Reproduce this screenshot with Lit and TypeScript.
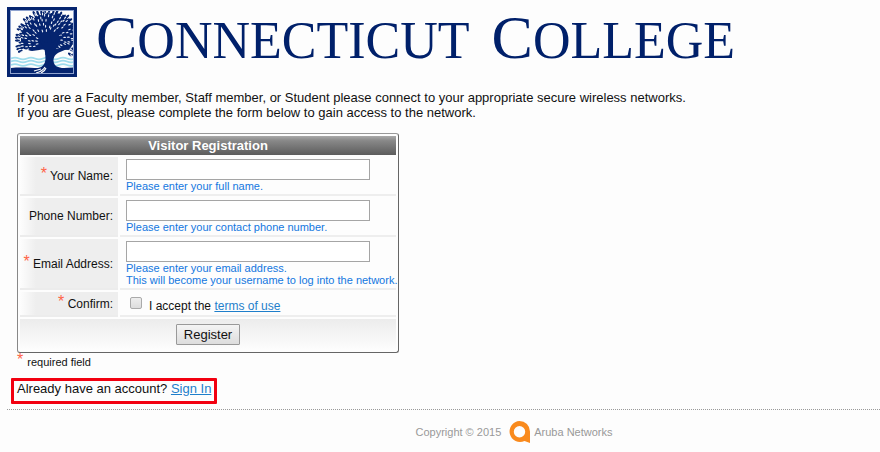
import { LitElement, html, svg, css, nothing } from "lit";
import { customElement } from "lit/decorators.js";

/** Leaf clusters on the crown's edge and the light between them: [x, y, rotation]. */
const leaves: number[][] = [];
const gaps: number[][] = [];
for (let ring = 0; ring < 7; ring++) {
  const count = 9 + ring * 4;
  for (let i = 0; i < count; i++) {
    const deg = -205 + (235 * i) / (count - 1) + (ring % 2) * 5;
    const rad = (deg * Math.PI) / 180;
    const r = 0.3 + ring * 0.12;
    const x = 41 + Math.cos(rad) * 30 * r;
    const y = 33 + Math.sin(rad) * 28 * r + ((i * 7) % 3) - 1;
    if (ring > 4) leaves.push([x, y, deg]);
    if ((i * 3 + ring) % 5 !== 0 && ring > 0) gaps.push([x + 1, y + 1, deg + 12]);
  }
}

@customElement("college-seal")
export class CollegeSeal extends LitElement {
  static styles = css`
    :host { display: block; flex: none; }
    svg { display: block; }
  `;
  render() {
    return html`<svg width="70" height="70" viewBox="0 0 70 70" role="img" aria-label="College seal">
      <defs><clipPath id="inner"><rect x="4" y="4" width="62" height="62" /></clipPath></defs>
      <rect width="70" height="70" fill="#05246f" />
      <rect x="3.5" y="3.5" width="63" height="63" fill="#fdfdfd" stroke="#8fa3cf" />
      <g clip-path="url(#inner)">
        <g fill="none" stroke="#9fdcec" stroke-width="1.7">
          ${[51.5, 54.5, 58].map(
            (y) => svg`<path d=${`M4 ${y}q4-1.6 8 0t8 0 8 0 8 0 8 0 8 0 8 0 8 0`} />`
          )}
        </g>
        <path fill="#05246f" d="M4 61C14 60 24 61 31 61C36 60 38 57 38.500 52L38 43C33 41 27 42 22 44L31 39L24 35L36 37L44 42L53 36L49 42L60 42L53 45C48 47 46.500 50 46.500 54C47 59 51 61 57 61L66 60.500V66H4Z" />
        <path fill="#05246f" d="M14 34Q13 24 20 16Q30 7 44 6Q56 5 63 12Q67 20 66 30Q67 38 62 43Q54 43 44 40Q34 43 25 44L17 42Z" />
        ${leaves.map(
          ([x, y, a]) => svg`<ellipse cx=${x} cy=${y} rx="2.6" ry="1.2" fill="#05246f" transform=${`rotate(${a} ${x} ${y})`} />`
        )}
        ${gaps.map(
          ([x, y, a]) => svg`<ellipse cx=${x} cy=${y} rx="1.5" ry="0.6" fill="#f0f3f9" transform=${`rotate(${a} ${x} ${y})`} />`
        )}
        <path fill="#05246f" d="M37 40L31 32L40 36L42 24L45 36L54 28L49 39L46 48H38.500Z" />
        <path fill="none" stroke="#fdfdfd" stroke-width="1.100" d="M29 66Q36 64 38 60M34 66Q38 64 39 61M27 64L34 62" />
      </g>
    </svg>`;
  }
}

@customElement("app-root")
export class AppRoot extends LitElement {
  static styles = css`
    :host {
      display: block;
      min-height: 100vh;
      box-sizing: border-box;
      padding: 7px 0 0 7px;
      background: #fdfdfd;
      color: #111;
      font: 13px/15px "Liberation Sans", Arial, sans-serif;
    }
    a { color: #1f7fcb; }
    .brand { display: flex; align-items: center; gap: 19px; height: 70px; }
    .wordmark {
      display: flex;
      gap: 22px;
      margin: 0;
      padding-bottom: 4px;
      color: #00206a;
      font: 52px/66px "Liberation Serif", "Times New Roman", serif;
      white-space: nowrap;
    }
    .initial { font-size: 62px; line-height: 60px; }
    .content { padding: 0 10px; }
    .intro { margin: 13px 0; }
    .frame {
      width: 382px;
      border: 1px solid #666;
      border-top-color: #999;
      border-left-color: #888;
      border-radius: 3px;
      border-spacing: 2px;
      table-layout: fixed;
      font-size: 12px;
    }
    .labels { width: 98px; }
    th, td { padding: 0; }
    .title {
      height: 19px;
      background: linear-gradient(#aaa, #888 25%, #5c5c5c);
      color: #fff;
      font-size: 13px;
      line-height: 19px;
    }
    .label {
      padding-right: 5px;
      border-bottom: 2px solid #ececec;
      background: linear-gradient(90deg, #fdfdfd, #eee 16px);
      font-weight: normal;
      text-align: right;
      white-space: nowrap;
    }
    .field { padding: 2px 6px; border-bottom: 2px solid #eee; }
    .star { color: #ff6347; font-size: 16px; line-height: 12px; vertical-align: 1px; }
    .text {
      display: block;
      box-sizing: border-box;
      width: 244px;
      height: 21px;
      padding: 1px 3px;
      border: 1px solid #a5a5a5;
      background: #fff;
      font: inherit;
    }
    .hint { color: #1377e0; font-size: 11px; line-height: 12px; white-space: nowrap; }
    .confirm { display: flex; align-items: center; gap: 7px; height: 19px; }
    .tick {
      appearance: none;
      box-sizing: border-box;
      width: 12px;
      height: 12px;
      margin: 0 0 2px 4px;
      border: 1px solid #aaa;
      border-radius: 2px;
      background: linear-gradient(#eee, #ddd);
    }
    .tick:checked { background: #1f7fcb; }
    .accept { padding-top: 5px; }
    .actions {
      height: 31px;
      background: linear-gradient(#ececec, #fdfdfd);
      text-align: center;
    }
    .register {
      height: 21px;
      padding: 0 7px;
      border: 1px solid #999;
      border-radius: 1px;
      background: linear-gradient(#f4f4f4, #ddd);
      color: #111;
      font: 13px/19px "Liberation Sans", Arial, sans-serif;
      vertical-align: middle;
    }
    .required { margin: 1px 0 0; font-size: 11px; line-height: 15px; }
    .required .star { margin-right: 1px; }
    .signin {
      width: fit-content;
      margin: 8px 0 5px -6px;
      padding: 0 3px 5px;
      border: 3px solid #f20010;
      border-radius: 1px;
    }
    .footer {
      display: flex;
      align-items: center;
      justify-content: center;
      padding: 10px 0 0 141px;
      border-top: 1px dotted #999;
      color: #999;
      font-size: 11px;
    }
    .mark { margin: 0 2px 0 7px; }
  `;

  private row(id: string, label: string, type: string, required: boolean, hints: string[]) {
    return html`<tr>
      <th class="label" scope="row">
        ${required ? html`<span class="star">*</span> ` : nothing}<label for=${id}>${label}:</label>
      </th>
      <td class="field">
        <input class="text" id=${id} type=${type} ?required=${required} />
        ${hints.map((hint) => html`<div class="hint">${hint}</div>`)}
      </td>
    </tr>`;
  }

  render() {
    return html`
      <header class="brand">
        <college-seal></college-seal>
        <h1 class="wordmark">
          <span><span class="initial">C</span>ONNECTICUT</span>
          <span><span class="initial">C</span>OLLEGE</span>
        </h1>
      </header>
      <main class="content">
        <p class="intro">
          If you are a Faculty member, Staff member, or Student please connect to your appropriate secure wireless networks.<br />
          If you are Guest, please complete the form below to gain access to the network.
        </p>
        <form @submit=${(e: Event) => e.preventDefault()}>
          <table class="frame">
            <colgroup><col class="labels" /><col /></colgroup>
            <thead><tr><th class="title" colspan="2">Visitor Registration</th></tr></thead>
            <tbody>
              ${this.row("name", "Your Name", "text", true, ["Please enter your full name."])}
              ${this.row("phone", "Phone Number", "tel", false, ["Please enter your contact phone number."])}
              ${this.row("email", "Email Address", "email", true, [
                "Please enter your email address.",
                "This will become your username to log into the network.",
              ])}
              <tr>
                <th class="label" scope="row"><span class="star">*</span> Confirm:</th>
                <td class="field">
                  <div class="confirm">
                    <input class="tick" id="accept" type="checkbox" required />
                    <span class="accept"><label for="accept">I accept the</label> <a href="#terms">terms of use</a></span>
                  </div>
                </td>
              </tr>
              <tr><td class="actions" colspan="2"><button class="register" type="submit">Register</button></td></tr>
            </tbody>
          </table>
        </form>
        <p class="required"><span class="star">*</span> required field</p>
        <p class="signin">Already have an account? <a href="#signin">Sign In</a></p>
      </main>
      <footer class="footer">
        <span>Copyright © 2015</span>
        <svg class="mark" width="24" height="24" viewBox="0 0 24 24" aria-hidden="true">
          <path fill="#f98a1d" fill-rule="evenodd" d="M11.500 1A10.500 10.500 0 1 0 16.500 21L22 23V11.500A10.500 10.500 0 0 0 11.500 1ZM11.500 6A5.700 5.700 0 1 1 11.500 17.400A5.700 5.700 0 0 1 11.500 6Z" />
        </svg>
        <span>Aruba Networks</span>
      </footer>
    `;
  }
}
